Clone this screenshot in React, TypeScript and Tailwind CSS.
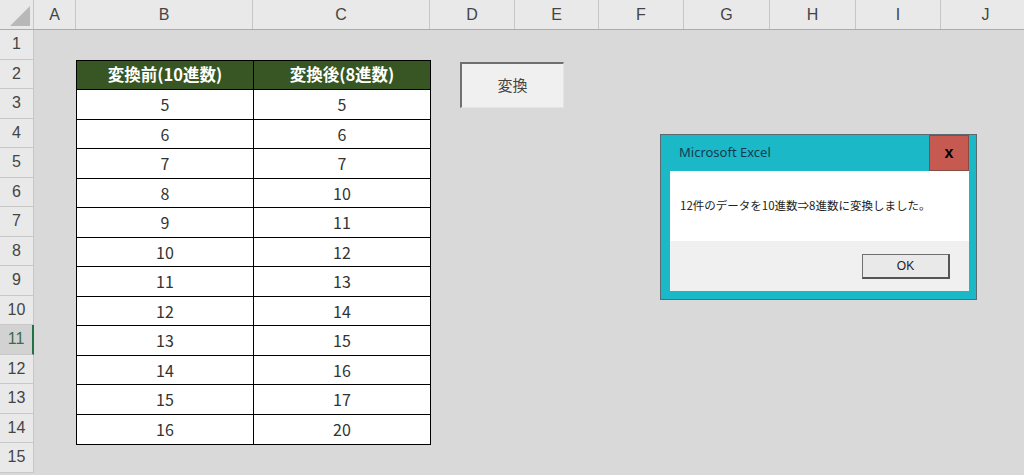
import React from 'react';

const font = "font-['Noto_Sans_CJK_JP','Noto_Sans',sans-serif]";

const columns: { label: string; w: string }[] = [
  { label: 'A', w: 'w-[42px]' },
  { label: 'B', w: 'w-[177px]' },
  { label: 'C', w: 'w-[177px]' },
  { label: 'D', w: 'w-[85px]' },
  { label: 'E', w: 'w-[84px]' },
  { label: 'F', w: 'w-[85px]' },
  { label: 'G', w: 'w-[86px]' },
  { label: 'H', w: 'w-[86px]' },
  { label: 'I', w: 'w-[85px]' },
  { label: 'J', w: 'w-[90px]' },
];

const rows = [
  [5, 5], [6, 6], [7, 7], [8, 10], [9, 11], [10, 12], [11, 13],
  [12, 14], [13, 15], [14, 16], [15, 17], [16, 20],
];

const rowNums = Array.from({ length: 15 }, (_, i) => i + 1);

export default function App() {
  return (
    <div className={`relative w-[1024px] h-[475px] overflow-hidden bg-[#d9d9d9] ${font}`}>
      {/* column header */}
      <div className="flex h-[30px] bg-[#e9e9e9] border-b border-[#ababab]">
        <div className="w-[34px] shrink-0 border-r border-[#c6c6c6] relative">
          <div className="absolute right-[3px] bottom-[3px] w-0 h-0 border-l-[20px] border-l-transparent border-b-[20px] border-b-[#b8b8b8]" />
        </div>
        {columns.map(c => (
          <div key={c.label} className={`${c.w} shrink-0 flex items-center justify-center border-r border-[#c6c6c6] text-[16px] text-[#444] font-['Liberation_Sans',sans-serif]`}>
            {c.label}
          </div>
        ))}
      </div>

      <div className="flex">
        {/* row header */}
        <div className="w-[34px] shrink-0 flex flex-col">
          {rowNums.map(n => (
            <div
              key={n}
              className={`h-[29.5px] flex items-center justify-center text-[16px] border-b border-[#c8c8c8] font-['Liberation_Sans',sans-serif] ${
                n === 11
                  ? 'bg-[#d2d2d2] text-[#3a6b4a] border-r-2 border-r-[#217346]'
                  : 'bg-[#e9e9e9] text-[#444] border-r border-r-[#c6c6c6]'
              }`}
            >
              {n}
            </div>
          ))}
        </div>

        {/* sheet */}
        <div className="flex-1 pl-[42px] pt-[29.5px]">
          <div className="w-[355px] border border-black">
            <div className="flex h-[29.5px] bg-[#375623] text-white font-bold text-[16.5px] border-b border-black">
              <div className="w-[177px] flex items-center justify-center border-r border-black">変換前(10進数)</div>
              <div className="flex-1 flex items-center justify-center">変換後(8進数)</div>
            </div>
            {rows.map(([a, b], i) => (
              <div key={i} className={`flex h-[29.5px] bg-white text-[16px] text-[#333] ${i < rows.length - 1 ? 'border-b border-black' : ''}`}>
                <div className="w-[177px] flex items-center justify-center border-r border-black">{a}</div>
                <div className="flex-1 flex items-center justify-center">{b}</div>
              </div>
            ))}
          </div>
        </div>
      </div>

      {/* form button */}
      <div className="absolute left-[460px] top-[62px] w-[104px] h-[46px] bg-[#f0f0f0] border-t-2 border-l-2 border-t-[#707070] border-l-[#707070] border-r border-b border-r-[#e4e4e4] border-b-[#e4e4e4] flex items-center justify-center text-[15px] text-[#444]">
        変換
      </div>

      {/* message box */}
      <div className="absolute left-[660px] top-[134px] w-[317px] h-[166px] border border-[#5a6a6e] bg-[#1bb8c8] flex flex-col pl-[9px] pb-[8px] pr-[7px]">
        <div className="h-[36px] flex items-stretch">
          <div className="flex-1 flex items-center pl-[9px] text-[13px] text-[#163c50] font-['Noto_Sans','Noto_Sans_CJK_JP',sans-serif]">
            Microsoft Excel
          </div>
          <div className="w-[40px] bg-[#c75a50] border border-[#8a4a44] flex items-center justify-center text-[16px] font-bold text-black font-['Liberation_Sans',sans-serif]">
            x
          </div>
        </div>
        <div className="h-[70px] bg-white flex items-center pl-[10px] text-[11.5px] text-[#222]">
          12件のデータを10進数⇒8進数に変換しました。
        </div>
        <div className="flex-1 bg-[#f0f0f0] flex items-center justify-end pr-[19px]">
          <div className="w-[88px] h-[25px] bg-[#e9e9e9] border border-[#707070] border-r-2 border-b-2 border-r-[#555] border-b-[#555] flex items-center justify-center text-[12px] text-[#222] font-['Liberation_Sans',sans-serif]">
            OK
          </div>
        </div>
      </div>
    </div>
  );
}
